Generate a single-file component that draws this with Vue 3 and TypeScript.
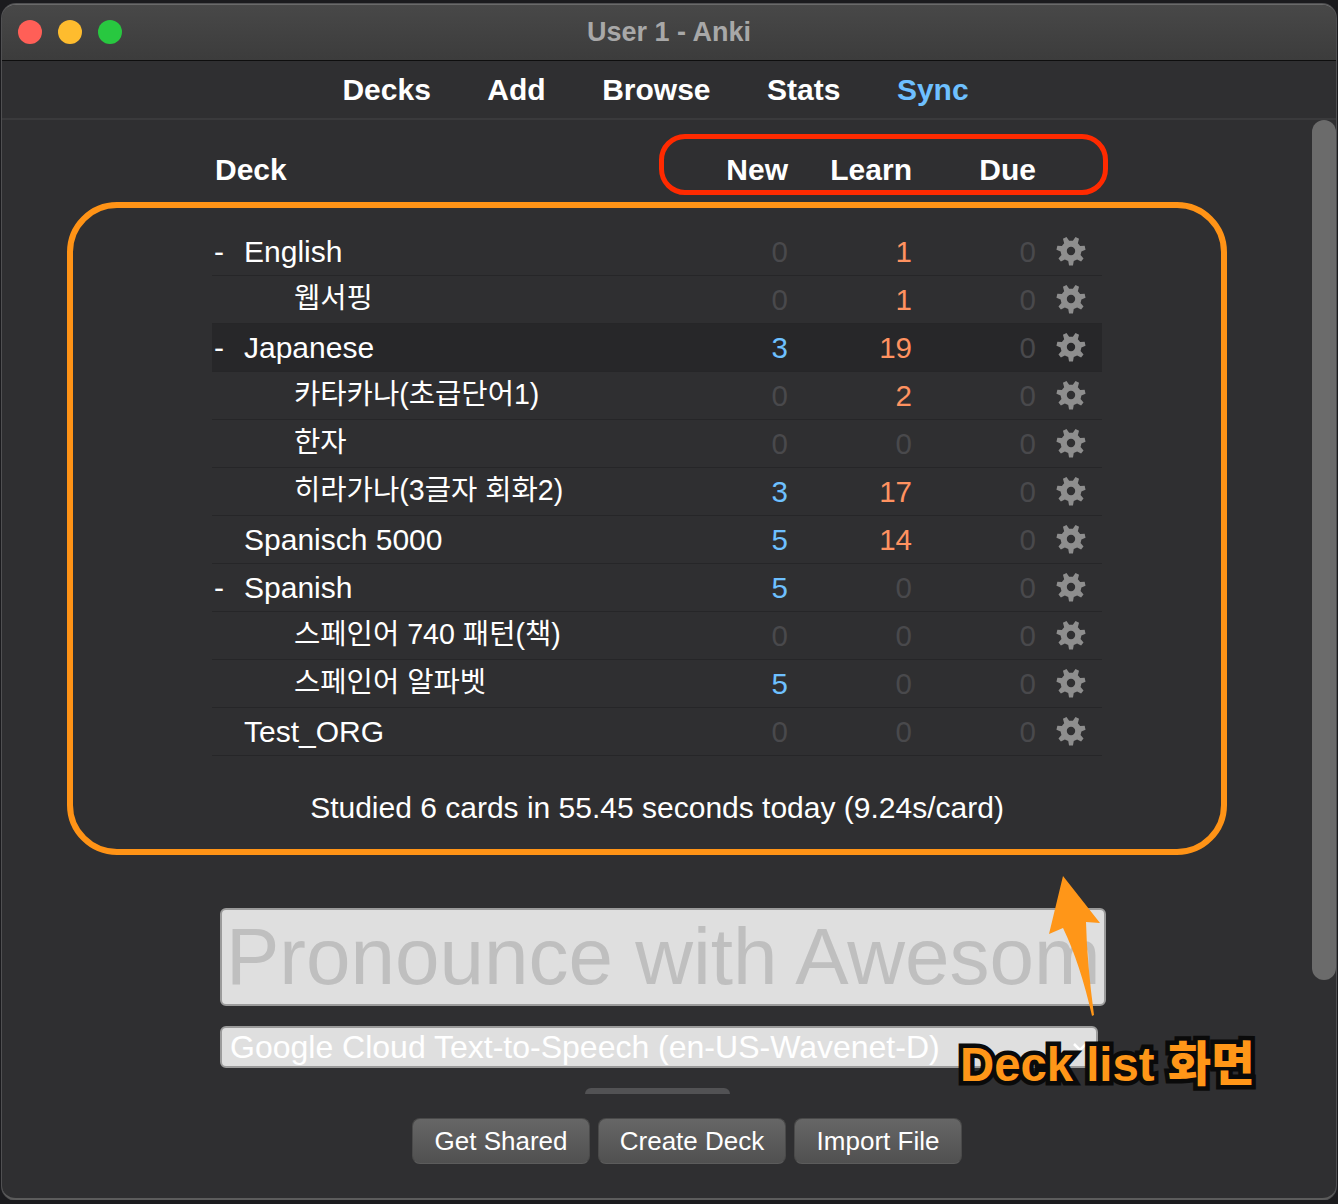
<template>
  <div class="window">
    <div class="titlebar">
      <div class="lights">
        <span class="light red"></span>
        <span class="light yellow"></span>
        <span class="light green"></span>
      </div>
      <span class="title">User 1 - Anki</span>
    </div>

    <nav class="toolbar">
      <a v-for="item in navItems" :key="item" :class="{ sync: item === 'Sync' }">{{ item }}</a>
    </nav>

    <main class="content">
      <div class="deck-row deck-head">
        <span class="name">Deck</span>
        <span class="num">New</span>
        <span class="num">Learn</span>
        <span class="num">Due</span>
        <span class="opts"></span>
      </div>

      <div class="deck-list">
        <div
          v-for="deck in decks"
          :key="deck.name"
          class="deck-row"
          :class="{ current: deck.current }"
        >
          <span class="name" :class="{ child: deck.child }">
            <span v-if="!deck.child" class="collapse">{{ deck.parent ? '-' : '' }}</span>{{ deck.name }}
          </span>
          <span class="num" :class="deck.newCount ? 'blue' : 'zero'">{{ deck.newCount }}</span>
          <span class="num" :class="deck.learn ? 'orange' : 'zero'">{{ deck.learn }}</span>
          <span class="num zero">0</span>
          <span class="opts">
            <svg class="gear" viewBox="0 0 30 30">
              <path :d="gearPath" fill-rule="evenodd" />
            </svg>
          </span>
        </div>
      </div>

      <p class="studied">Studied 6 cards in 55.45 seconds today (9.24s/card)</p>

      <div class="tts-input">Pronounce with Awesom</div>
      <div class="tts-select">
        <span>Google Cloud Text-to-Speech (en-US-Wavenet-D)</span>
        <svg class="chevron" viewBox="0 0 16 10">
          <path d="M2 2l6 6 6-6" />
        </svg>
      </div>
      <div class="stub"></div>

      <div class="buttons">
        <button class="get">Get Shared</button>
        <button class="create">Create Deck</button>
        <button class="import">Import File</button>
      </div>
    </main>

    <div class="scrollbar"></div>

    <!-- annotations drawn on top of the screenshot -->
    <div class="mark-red"></div>
    <div class="mark-orange"></div>
    <svg class="arrow" viewBox="0 0 60 146">
      <path d="M15 3 L52 50 L38 49 Q39 90 46 142 L44 143 Q32 90 15 55 L1 61 Z" />
    </svg>
    <div class="callout">Deck list 화면</div>
  </div>
</template>

<script setup lang="ts">
interface Deck {
  name: string
  newCount: number
  learn: number
  child?: boolean
  parent?: boolean
  current?: boolean
}

const navItems = ['Decks', 'Add', 'Browse', 'Stats', 'Sync']

const decks: Deck[] = [
  { name: 'English', newCount: 0, learn: 1, parent: true },
  { name: '웹서핑', newCount: 0, learn: 1, child: true },
  { name: 'Japanese', newCount: 3, learn: 19, parent: true, current: true },
  { name: '카타카나(초급단어1)', newCount: 0, learn: 2, child: true },
  { name: '한자', newCount: 0, learn: 0, child: true },
  { name: '히라가나(3글자 회화2)', newCount: 3, learn: 17, child: true },
  { name: 'Spanisch 5000', newCount: 5, learn: 14 },
  { name: 'Spanish', newCount: 5, learn: 0, parent: true },
  { name: '스페인어 740 패턴(책)', newCount: 0, learn: 0, child: true },
  { name: '스페인어 알파벳', newCount: 5, learn: 0, child: true },
  { name: 'Test_ORG', newCount: 0, learn: 0 }
]

// seven tooth cog, bottom tooth pointing straight down
function buildGear(): string {
  const teeth = 7
  const c = 15
  const outer = 14.6
  const root = 10.4
  const hole = 4.2
  const pts: string[] = []
  for (let i = 0; i < teeth; i++) {
    const a = Math.PI / 2 + (i * 2 * Math.PI) / teeth
    const step = (2 * Math.PI) / teeth
    const offsets: [number, number][] = [
      [-0.3, root],
      [-0.15, outer],
      [0.15, outer],
      [0.3, root]
    ]
    for (const [o, r] of offsets) {
      const t = a + o * step
      pts.push(`${(c + r * Math.cos(t)).toFixed(2)} ${(c + r * Math.sin(t)).toFixed(2)}`)
    }
  }
  const ring = `M${pts.join('L')}Z`
  const inner = `M${c - hole} ${c}a${hole} ${hole} 0 1 0 ${hole * 2} 0a${hole} ${hole} 0 1 0 ${-hole * 2} 0Z`
  return ring + inner
}

const gearPath = buildGear()
</script>

<style>
html,
body {
  margin: 0;
  background: #1b1b1e;
}
</style>

<style scoped>
.window {
  position: relative;
  box-sizing: border-box;
  margin: 4px 2px 0;
  height: 1196px;
  background: #2f2f31;
  border-radius: 14px;
  border-top: 1px solid #6a6a6a;
  border-bottom: 2px solid #5c5c5c;
  box-shadow: 0 0 0 1px #505052;
  overflow: hidden;
  font-family: "Liberation Sans", "Noto Sans CJK KR", sans-serif;
  color: #fff;
}

.titlebar {
  position: relative;
  height: 55px;
  display: flex;
  align-items: center;
  justify-content: center;
  background: linear-gradient(#484848, #3c3c3c);
  border-bottom: 1px solid #0e0e0e;
}

.lights {
  position: absolute;
  left: 16px;
  top: 15px;
  display: flex;
  gap: 16px;
}

.light {
  width: 24px;
  height: 24px;
  border-radius: 50%;
}

.red { background: #ff5f57; }
.yellow { background: #febc2e; }
.green { background: #28c840; }

.title {
  font-size: 27px;
  font-weight: 700;
  color: #a8a8a8;
}

.toolbar {
  height: 57px;
  padding-right: 27px;
  display: flex;
  justify-content: center;
  align-items: center;
  gap: 56.5px;
  font-size: 30px;
  font-weight: 700;
  border-bottom: 2px solid #3a3a3c;
}

.sync {
  color: #6ec0ff;
}

.content {
  padding-top: 26px;
  display: flex;
  flex-direction: column;
  align-items: flex-start;
}

.deck-row {
  margin-left: 210px;
  width: 890px;
  height: 48px;
  box-sizing: border-box;
  display: flex;
  align-items: center;
  font-size: 29.5px;
  line-height: 36px;
  border-bottom: 1px solid #262628;
}

.current {
  background: #272729;
}

.name {
  flex: 1;
  white-space: nowrap;
  padding-left: 2px;
  padding-top: 1px;
  font-size: 30px;
}

.child {
  padding-left: 82px;
  font-size: 28.6px;
  transform: translateY(-2px);
}

.collapse {
  display: inline-block;
  width: 30px;
}

.num {
  width: 124px;
  text-align: right;
  padding-top: 1px;
}

.deck-head {
  font-size: 30px;
  font-weight: 700;
  border-bottom: none;
  margin-bottom: 34px;
}

.deck-head .name {
  padding: 0 0 0 3px;
}

.deck-head .num {
  padding-top: 0;
}

.zero { color: #49494c; }
.blue { color: #6ec0ff; }
.orange { color: #ff9260; }

.opts {
  width: 66px;
  display: flex;
  justify-content: flex-end;
  padding-right: 16px;
  box-sizing: border-box;
}

.gear {
  width: 30px;
  height: 30px;
  fill: #8e8e8e;
  transform: translateY(-1px);
}

.studied {
  margin: 32px 0 0;
  width: 1310px;
  text-align: center;
  font-size: 30px;
  line-height: 40px;
}

.tts-input {
  margin: 80px 0 0 218px;
  width: 886px;
  height: 98px;
  box-sizing: border-box;
  background: #dfdfdf;
  border: 2px solid #9b9b9b;
  border-radius: 6px;
  color: #bfbfbf;
  font-size: 80px;
  line-height: 93px;
  padding-left: 4px;
  white-space: nowrap;
}

.tts-select {
  position: relative;
  margin: 20px 0 0 218px;
  width: 878px;
  height: 42px;
  box-sizing: border-box;
  background: #dfdfdf;
  border: 2px solid #9b9b9b;
  border-radius: 6px;
  color: #fff;
  font-size: 32px;
  line-height: 39px;
  padding-left: 8px;
  white-space: nowrap;
}

.chevron {
  position: absolute;
  right: 8px;
  top: 14px;
  width: 16px;
  height: 10px;
  fill: none;
  stroke: #fff;
  stroke-width: 2.5;
}

.stub {
  margin: 20px 0 0 583px;
  width: 145px;
  height: 6px;
  background: #525254;
  border-radius: 6px 6px 0 0;
}

.buttons {
  margin: 24px 0 0 410px;
  display: flex;
  gap: 8px;
}

button {
  height: 46px;
  padding: 0;
  background: linear-gradient(#666, #505050);
  border: 1px solid #4a4a4a;
  border-bottom-color: #5c5c5c;
  border-radius: 8px;
  color: #fff;
  font-family: inherit;
  font-size: 26px;
}

.get { width: 178px; }
.create { width: 188px; }
.import { width: 168px; }

.scrollbar {
  position: absolute;
  top: 115px;
  right: 0;
  width: 24px;
  height: 860px;
  background: #6b6b6b;
  border-radius: 12px;
}

.mark-red {
  position: absolute;
  left: 657px;
  top: 129px;
  width: 449px;
  height: 61px;
  box-sizing: border-box;
  border: 5px solid #ff2a00;
  border-radius: 26px;
}

.mark-orange {
  position: absolute;
  left: 65px;
  top: 197px;
  width: 1160px;
  height: 653px;
  box-sizing: border-box;
  border: 6px solid #ff9316;
  border-radius: 50px;
}

.arrow {
  position: absolute;
  left: 1046px;
  top: 868px;
  width: 60px;
  height: 146px;
  fill: #ff9618;
}

.callout {
  position: absolute;
  left: 958px;
  top: 1032px;
  font-family: "Liberation Sans", "Noto Sans CJK KR", sans-serif;
  font-size: 47.3px;
  font-weight: 900;
  line-height: 56px;
  color: #ff9618;
  white-space: nowrap;
  -webkit-text-stroke: 9px #0a0a0a;
  paint-order: stroke fill;
}
</style>
